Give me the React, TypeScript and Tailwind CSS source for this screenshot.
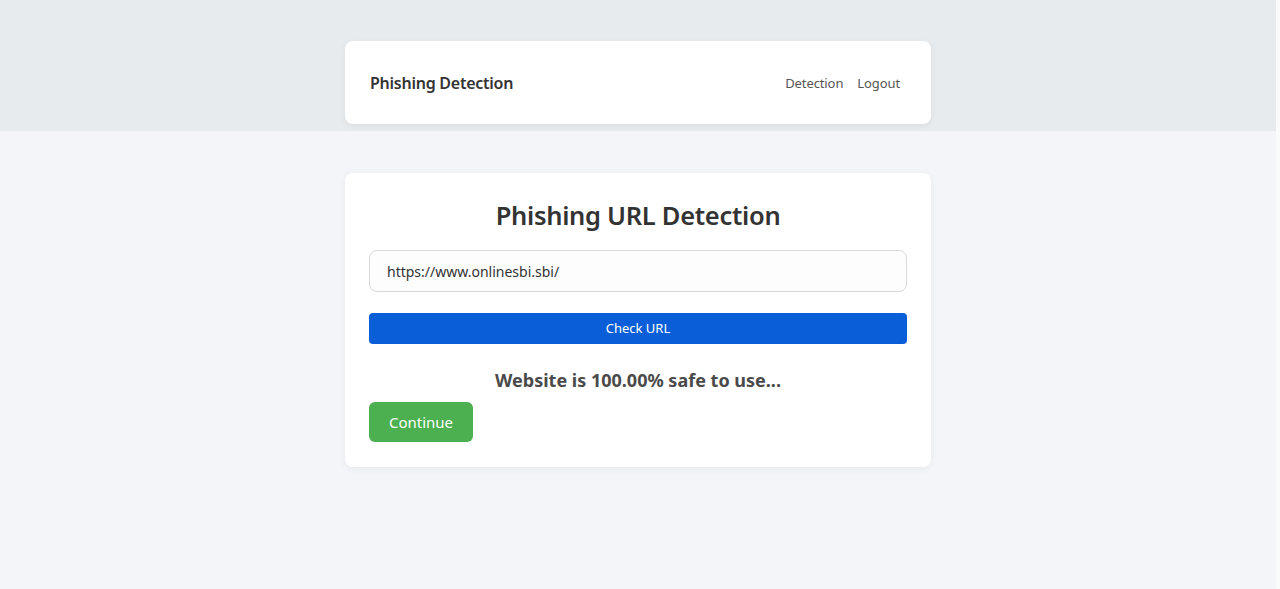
import { useState } from 'react';

export default function App() {
  const [url, setUrl] = useState('https://www.onlinesbi.sbi/');

  return (
    <div className="flex h-[589px] w-full bg-[#f9fafb] font-['Noto_Sans','Open_Sans',sans-serif]">
      <div className="flex min-w-0 flex-1 flex-col bg-[#f4f5f9]">
        {/* top band + navbar */}
        <div className="flex h-[131px] justify-center bg-[#e8ebee] pt-[41px]">
          <nav className="flex h-[83px] w-[586px] items-center justify-between rounded-lg bg-white pl-[25px] pr-[24px] shadow-[0_2px_6px_rgba(0,0,0,0.06)]">
            <span className="text-[16px] font-semibold tracking-[-0.25px] text-[#333]">Phishing Detection</span>
            <div className="flex gap-[14px] pt-[2px] text-[13px] tracking-[-0.1px] text-[#555]">
              <a href="#">Detection</a>
              <a href="#" className="pr-[7px]">Logout</a>
            </div>
          </nav>
        </div>

        {/* detection card */}
        <div className="flex justify-center pt-[42px]">
          <div className="flex w-[586px] flex-col rounded-lg bg-white px-6 pt-[24px] pb-[25px] shadow-[0_2px_8px_rgba(0,0,0,0.05)]">
            <h1 className="text-center text-[25.5px] leading-[36px] font-semibold tracking-[-0.3px] text-[#333]">
              Phishing URL Detection
            </h1>
            <input
              value={url}
              onChange={(e) => setUrl(e.target.value)}
              className="mt-[17px] h-[42px] w-full rounded-lg border border-[#d9d9d9] bg-[#fdfdfd] px-[17px] text-[14px] text-[#333] outline-none"
            />
            <button className="mt-[21px] h-[31px] w-full rounded bg-[#0a5ed7] text-[13px] text-white">
              Check URL
            </button>
            <p className="mt-[23px] text-center text-[18px] leading-[26px] font-bold text-[#4a4a4a]">
              Website is 100.00% safe to use...
            </p>
            <div className="mt-[9px]">
              <button className="h-[40px] w-[104px] rounded-md bg-[#4caf50] text-[15px] text-white">
                Continue
              </button>
            </div>
          </div>
        </div>
      </div>
      <div className="w-[4px] bg-[#fafbfc]" />
    </div>
  );
}
